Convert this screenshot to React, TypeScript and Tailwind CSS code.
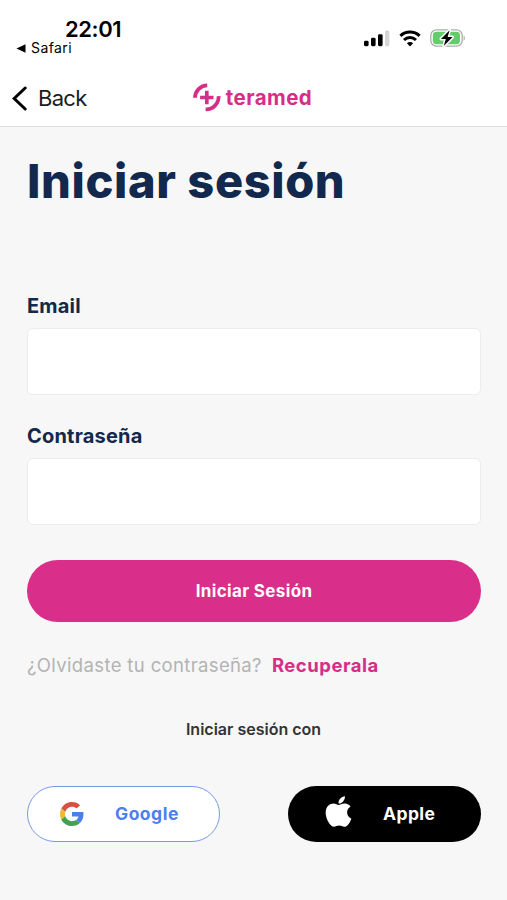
import React from 'react';
import { FaApple } from 'react-icons/fa';

// ==================== ICONS ====================
const SignalIcon = () => (
  <svg width="26" height="17" viewBox="0 0 26 17" fill="#000">
    <rect x="0" y="10.8" width="4.6" height="5.4" rx="1.4" />
    <rect x="7" y="7.8" width="4.6" height="8.4" rx="1.4" />
    <rect x="14" y="4.2" width="4.6" height="12" rx="1.4" />
    <rect x="21" y="0.5" width="4.4" height="15.7" rx="1.4" fill="#d6d6d6" />
  </svg>
);

const WifiIcon = () => (
  <svg width="22" height="17" viewBox="0 0 22 17" fill="none" stroke="#000" strokeWidth="3">
    <path d="M1.4 5.9a14 14 0 0 1 19.2 0" />
    <path d="M5 10a8.7 8.7 0 0 1 12 0" />
    <path d="M11 16.4l-3.1-3.2a4.4 4.4 0 0 1 6.2 0z" fill="#000" stroke="none" />
  </svg>
);

const BatteryIcon = () => (
  <svg width="36" height="20" viewBox="0 0 36 20">
    <rect x="0.8" y="1.8" width="31.4" height="16.4" rx="5.6" fill="#fff" stroke="#a9aea9" strokeWidth="1.3" />
    <rect x="2.8" y="3.8" width="27.2" height="12.4" rx="3.6" fill="#62cd6a" />
    <path d="M33.6 7.4c1.6.6 1.6 4.6 0 5.2z" fill="#a9aea9" />
    <path
      d="M19.6 2.2L11 10.9h4.8l-2 7.1 8.8-8.9h-5z"
      fill="#000"
      stroke="#fff"
      strokeWidth="3"
      strokeLinejoin="round"
      paintOrder="stroke"
    />
  </svg>
);

const TeramedIcon = () => (
  <svg width="28" height="29" viewBox="0 0 28 29" fill="none" stroke="#d62e87">
    <path d="M2 14.8A12.4 12.4 0 0 1 14.2 2.4" strokeWidth="3.8" />
    <path d="M25.6 13.2A12.6 12.6 0 0 1 12.6 26.4" strokeWidth="3.8" />
    <path d="M13.8 7.8v13.4M7.1 14.5h13.4" strokeWidth="3.7" />
  </svg>
);

const GoogleIcon = () => (
  <svg width="24" height="24" viewBox="0 0 48 48">
    <path fill="#d8503f" d="M24 9.5c3.54 0 6.71 1.22 9.21 3.6l6.85-6.85C35.9 2.38 30.47 0 24 0 14.62 0 6.51 5.38 2.56 13.22l7.98 6.19C12.43 13.72 17.74 9.5 24 9.5z" />
    <path fill="#4a7fee" d="M46.98 24.55c0-1.57-.15-3.09-.38-4.55H24v9.02h12.94c-.58 2.96-2.26 5.48-4.78 7.18l7.73 6c4.51-4.18 7.09-10.36 7.09-17.65z" />
    <path fill="#f0b932" d="M10.53 28.59c-.48-1.45-.76-2.99-.76-4.59s.27-3.14.76-4.59l-7.98-6.19C.92 16.46 0 20.12 0 24c0 3.88.92 7.54 2.56 10.78l7.97-6.19z" />
    <path fill="#44a053" d="M24 48c6.48 0 11.93-2.13 15.89-5.81l-7.73-6c-2.15 1.45-4.92 2.3-8.16 2.3-6.26 0-11.57-4.22-13.47-9.91l-7.98 6.19C6.51 42.62 14.62 48 24 48z" />
  </svg>
);

// ==================== FORM FIELD ====================
interface FieldProps {
  id: string;
  label: string;
  type: string;
}

const Field = ({ id, label, type }: FieldProps) => (
  <div className="flex flex-col">
    <label htmlFor={id} className="h-7 self-start text-[20px] leading-7 font-bold tracking-[0.2px] whitespace-nowrap">
      {label}
    </label>
    <input
      id={id}
      type={type}
      className="mt-2 h-[67px] w-full rounded-md border border-[#ececec] bg-white px-4 outline-none"
    />
  </div>
);

// ==================== LOGIN SCREEN ====================
export default function App() {
  return (
    <div className="flex h-[900px] w-full flex-col overflow-hidden bg-[#f7f7f7] font-['Inter',sans-serif]">
      <header className="h-[127px] border-b border-[#dfdfdf] bg-white">
        <div className="flex h-[70px] justify-between pt-[17px] pl-4">
          <div className="flex flex-col">
            <span className="pl-[49px] text-[22px] leading-6 font-semibold tracking-[-0.4px]">22:01</span>
            <span className="flex h-[14px] items-center gap-[5px] text-[14px] leading-[14px] tracking-[0.4px]">
              <svg width="10" height="9" viewBox="0 0 10 9">
                <path d="M0.5 4.5L9.5 0.3v8.4z" />
              </svg>
              Safari
            </span>
          </div>
          <div className="flex h-[42px] items-center gap-[9px] pr-[41px]">
            <SignalIcon />
            <WifiIcon />
            <BatteryIcon />
          </div>
        </div>
        <div className="grid h-14 grid-cols-3 items-center">
          <button className="flex items-center gap-[11px] pl-3 text-[22px] leading-7 tracking-[-0.7px] text-[#1c1c1e]">
            <svg width="15" height="25" viewBox="0 0 15 25" fill="none" stroke="#000" strokeWidth="3" strokeLinecap="round">
              <path d="M13.2 2L2.2 12.5l11 10.5" />
            </svg>
            Back
          </button>
          <div className="flex items-center justify-center gap-[5px] pr-[2px] pb-[2px] text-[#d62e87]">
            <TeramedIcon />
            <span className="pt-px text-[20.5px] leading-7 font-bold tracking-[0.45px]">teramed</span>
          </div>
        </div>
      </header>

      <main className="flex flex-col pt-6 pr-[26px] pl-[27px]">
        <h1 className="h-[60px] self-start text-[47px] leading-[60px] font-extrabold tracking-[0.6px] whitespace-nowrap text-[#12284c]">
          Iniciar sesión
        </h1>

        <form className="mt-[81px] flex flex-col gap-[27px] text-[#12284c]">
          <Field id="email" label="Email" type="email" />
          <Field id="password" label="Contraseña" type="password" />
        </form>

        <button className="mt-[35px] h-[62px] rounded-full bg-[#d92e89] pt-[2px] text-[17px] font-bold tracking-[0.35px] text-white">
          Iniciar Sesión
        </button>

        <p className="mt-[29px] flex h-7 items-center gap-[10px] pt-px text-[18.5px] whitespace-nowrap">
          <span className="tracking-[0.36px] text-[#b3b3b3]">¿Olvidaste tu contraseña?</span>
          <a className="font-bold tracking-[0.5px] text-[#d62e87]">Recuperala</a>
        </p>

        <p className="mt-[38px] h-6 pr-px text-center text-[16px] leading-6 font-semibold text-[#333]">
          Iniciar sesión con
        </p>

        <div className="mt-[45px] flex justify-between">
          <button className="flex h-[56px] w-[193px] items-center rounded-full border-[1.5px] border-[#7799ea] bg-white pl-8 text-[17.5px] font-bold tracking-[0.5px] text-[#4d80ec]">
            <GoogleIcon />
            <span className="pl-[31px]">Google</span>
          </button>
          <button className="flex h-[56px] w-[193px] items-center rounded-full bg-black pl-[33px] text-[17.5px] font-bold tracking-[0.4px] text-white">
            <FaApple size={35} className="mb-[5px]" />
            <span className="pl-[27px]">Apple</span>
          </button>
        </div>
      </main>
    </div>
  );
}
